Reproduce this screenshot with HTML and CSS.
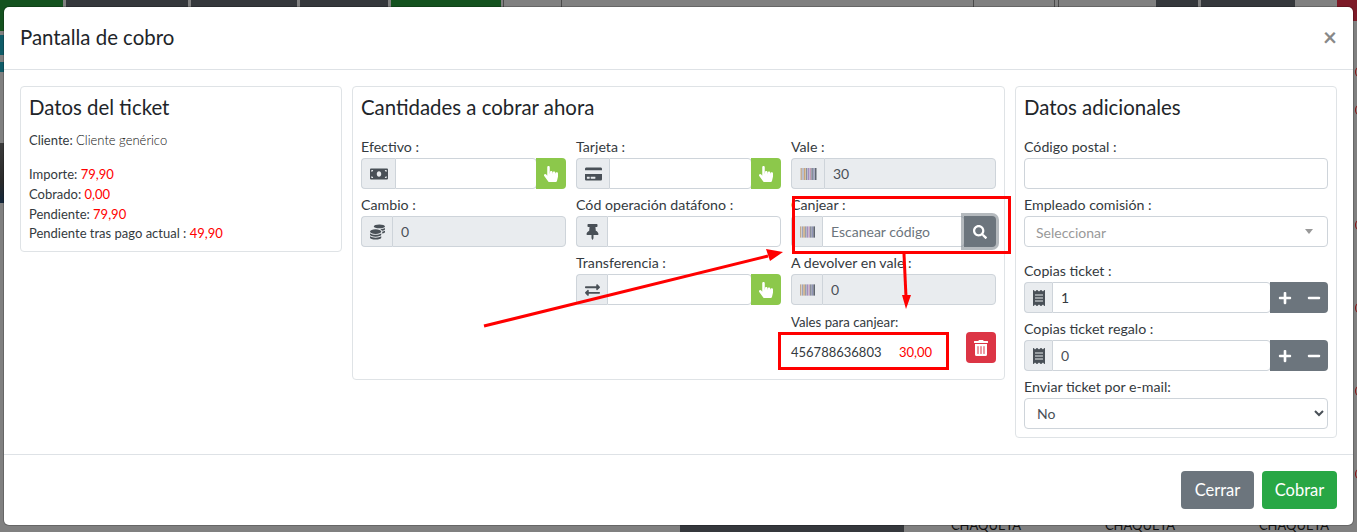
FILE: index.html
```html
<!DOCTYPE html>
<html lang="es">
<head>
<meta charset="utf-8">
<title>Pantalla de cobro</title>
<link rel="stylesheet" href="styles.css">
</head>
<body>
<svg class="sprite" xmlns="http://www.w3.org/2000/svg">
  <symbol id="i-hand" viewBox="0 0 448 512"><path d="M448 240v96c0 3.084-.356 6.159-1.063 9.162l-32 136C410.686 499.23 394.562 512 376 512H168a40.004 40.004 0 0 1-32.35-16.473l-127.997-176c-12.993-17.866-9.043-42.883 8.822-55.876 17.867-12.994 42.884-9.043 55.877 8.823L104 315.992V40c0-22.091 17.908-40 40-40s40 17.909 40 40v200h8v-40c0-22.091 17.908-40 40-40s40 17.909 40 40v40h8v-24c0-22.091 17.908-40 40-40s40 17.909 40 40v24h8c0-22.091 17.908-40 40-40s40 17.909 40 40z"/></symbol>
  <symbol id="i-money" viewBox="0 0 640 512"><path d="M608 64H32C14.33 64 0 78.33 0 96v320c0 17.67 14.33 32 32 32h576c17.67 0 32-14.33 32-32V96c0-17.67-14.33-32-32-32zM48 400v-64c35.35 0 64 28.65 64 64H48zm0-224v-64h64c0 35.35-28.65 64-64 64zm272 176c-44.19 0-80-42.99-80-96 0-53.02 35.82-96 80-96s80 42.98 80 96c0 53.03-35.83 96-80 96zm272 48h-64c0-35.35 28.65-64 64-64v64zm0-224c-35.35 0-64-28.65-64-64h64v64z"/></symbol>
  <symbol id="i-card" viewBox="0 0 576 512"><path d="M0 432c0 26.5 21.5 48 48 48h480c26.5 0 48-21.5 48-48V256H0v176zm192-68c0-6.6 5.4-12 12-12h136c6.6 0 12 5.4 12 12v40c0 6.6-5.4 12-12 12H204c-6.6 0-12-5.4-12-12v-40zm-128 0c0-6.6 5.4-12 12-12h72c6.6 0 12 5.4 12 12v40c0 6.6-5.4 12-12 12H76c-6.6 0-12-5.4-12-12v-40zM576 80v48H0V80c0-26.5 21.5-48 48-48h480c26.5 0 48 21.5 48 48z"/></symbol>
  <symbol id="i-pin" viewBox="0 0 384 512"><path d="M298.028 214.267L285.793 96H328c13.255 0 24-10.745 24-24V24c0-13.255-10.745-24-24-24H56C42.745 0 32 10.745 32 24v48c0 13.255 10.745 24 24 24h42.207L85.972 214.267C37.465 236.82 0 277.261 0 328c0 13.255 10.745 24 24 24h136v104.007c0 1.242.289 2.467.845 3.578l24 48c2.941 5.882 11.364 5.893 14.311 0l24-48a8.008 8.008 0 0 0 .845-3.578V352h136c13.255 0 24-10.745 24-24-.001-51.183-37.983-91.42-85.973-113.733z"/></symbol>
  <symbol id="i-coins" viewBox="0 0 512 512"><path d="M0 405.3V448c0 35.3 86 64 192 64s192-28.7 192-64v-42.7C342.7 434.4 267.2 448 192 448S41.3 434.4 0 405.3zM320 128c106 0 192-28.7 192-64S426 0 320 0 128 28.7 128 64s86 64 192 64zM0 300.4V352c0 35.3 86 64 192 64s192-28.7 192-64v-51.6c-41.3 34-116.9 51.6-192 51.6S41.3 334.4 0 300.4zm416 11c57.3-11.1 96-31.7 96-55.4v-42.7c-23.2 16.4-57.3 27.6-96 34.5v63.6zM192 160C86 160 0 195.8 0 240s86 80 192 80 192-35.8 192-80-86-80-192-80zm219.3 56.3c60-10.8 100.7-32 100.7-56.3v-42.7c-35.5 25.1-96.5 38.6-160.7 41.8 29.5 14.3 51.2 33.5 60 57.2z"/></symbol>
  <symbol id="i-exchange" viewBox="0 0 512 512"><path d="M0 168v-16c0-13.255 10.745-24 24-24h360V80c0-21.367 25.899-32.042 40.971-16.971l80 80c9.372 9.373 9.372 24.569 0 33.941l-80 80C409.956 271.982 384 261.456 384 240v-48H24c-13.255 0-24-10.745-24-24zm488 152H128v-48c0-21.314-25.862-32.08-40.971-16.971l-80 80c-9.372 9.373-9.372 24.569 0 33.941l80 80C102.057 463.997 128 453.437 128 432v-48h360c13.255 0 24-10.745 24-24v-16c0-13.255-10.745-24-24-24z"/></symbol>
  <symbol id="i-barcode" viewBox="0 0 16 12">
    <rect x="0" width="1.4" height="12" fill="#c2a98c"/><rect x="2" width="1" height="12" fill="#8d93b0"/><rect x="3.5" width="1.6" height="12" fill="#c9a67c"/><rect x="5.6" width="1.2" height="12" fill="#7f8794"/><rect x="7.2" width="1.8" height="12" fill="#a48fc0"/><rect x="9.4" width="1.1" height="12" fill="#c39bb0"/><rect x="10.9" width="1.4" height="12" fill="#6f7684"/><rect x="12.7" width="1.1" height="12" fill="#8b8fb5"/><rect x="14.2" width="1.8" height="12" fill="#5f6570"/>
  </symbol>
  <symbol id="i-search" viewBox="0 0 512 512"><path d="M505 442.7L405.3 343c-4.5-4.5-10.6-7-17-7H372c27.6-35.3 44-79.7 44-128C416 93.1 322.9 0 208 0S0 93.1 0 208s93.1 208 208 208c48.3 0 92.7-16.4 128-44v16.3c0 6.4 2.5 12.5 7 17l99.7 99.7c9.4 9.4 24.6 9.4 33.9 0l28.3-28.3c9.4-9.4 9.4-24.6.1-34zM208 336c-70.7 0-128-57.2-128-128 0-70.7 57.2-128 128-128 70.7 0 128 57.2 128 128 0 70.7-57.2 128-128 128z"/></symbol>
  <symbol id="i-trash" viewBox="0 0 448 512"><path d="M32 464a48 48 0 0 0 48 48h288a48 48 0 0 0 48-48V128H32zm272-256a16 16 0 0 1 32 0v224a16 16 0 0 1-32 0zm-96 0a16 16 0 0 1 32 0v224a16 16 0 0 1-32 0zm-96 0a16 16 0 0 1 32 0v224a16 16 0 0 1-32 0zM432 32H312l-9.4-18.7A24 24 0 0 0 281.1 0H166.8a23.72 23.72 0 0 0-21.4 13.3L136 32H16A16 16 0 0 0 0 48v32a16 16 0 0 0 16 16h416a16 16 0 0 0 16-16V48a16 16 0 0 0-16-16z"/></symbol>
  <symbol id="i-receipt" viewBox="0 0 384 512"><path d="M358.4 3.2L320 48 265.6 3.2a15.9 15.9 0 0 0-19.2 0L192 48 137.6 3.2a15.9 15.9 0 0 0-19.2 0L64 48 25.6 3.2C15-4.7 0 2.8 0 16v480c0 13.2 15 20.7 25.6 12.8L64 464l54.4 44.8a15.9 15.9 0 0 0 19.2 0L192 464l54.4 44.8a15.9 15.9 0 0 0 19.2 0L320 464l38.4 44.8c10.5 7.9 25.6.4 25.6-12.8V16c0-13.2-15-20.7-25.6-12.8zM320 360c0 4.4-3.6 8-8 8H72c-4.4 0-8-3.6-8-8v-16c0-4.4 3.6-8 8-8h240c4.4 0 8 3.6 8 8v16zm0-96c0 4.4-3.6 8-8 8H72c-4.4 0-8-3.6-8-8v-16c0-4.4 3.6-8 8-8h240c4.4 0 8 3.6 8 8v16zm0-96c0 4.4-3.6 8-8 8H72c-4.4 0-8-3.6-8-8v-16c0-4.4 3.6-8 8-8h240c4.4 0 8 3.6 8 8v16z"/></symbol>
  <symbol id="i-plus" viewBox="0 0 448 512"><path d="M416 208H272V64c0-17.67-14.33-32-32-32h-32c-17.67 0-32 14.33-32 32v144H32c-17.67 0-32 14.33-32 32v32c0 17.67 14.33 32 32 32h144v144c0 17.67 14.33 32 32 32h32c17.67 0 32-14.33 32-32V304h144c17.67 0 32-14.33 32-32v-32c0-17.67-14.33-32-32-32z"/></symbol>
  <symbol id="i-minus" viewBox="0 0 448 512"><path d="M416 208H32c-17.67 0-32 14.33-32 32v32c0 17.67 14.33 32 32 32h384c17.67 0 32-14.33 32-32v-32c0-17.67-14.33-32-32-32z"/></symbol>
</svg>

<div class="backdrop">
  <div class="bg-top">
    <span class="seg seg-green w63"></span><span class="seg seg-gap"></span>
    <span class="seg seg-dark w122"></span><span class="seg seg-gap"></span>
    <span class="seg seg-dark w106"></span><span class="seg seg-gap"></span>
    <span class="seg seg-dark w88"></span><span class="seg seg-gap"></span>
    <span class="seg seg-green w110"></span>
    <span class="seg seg-fill"></span>
    <span class="seg seg-dark w42"></span><span class="seg seg-gap"></span>
    <span class="seg seg-dark w94"></span>
    <span class="seg seg-gray w42"></span>
    <span class="seg seg-red w20"></span>
  </div>
  <div class="bg-left">
    <span class="lft lft-green"></span>
    <span class="lft lft-gap-a"></span>
    <span class="lft lft-teal-a"></span>
    <span class="lft lft-gap-b"></span>
    <span class="lft lft-teal-b"></span>
    <span class="lft lft-gap-c"></span>
    <span class="lft lft-photo"></span>
  </div>
  <div class="bg-right">
    <span></span><span></span><span></span><span></span><span></span><span></span>
  </div>
  <div class="bg-bottom">
    <span class="bot bot-dark"></span>
    <span class="bot">CHAQUETA</span>
    <span class="bot">CHAQUETA</span>
    <span class="bot">CHAQUETA</span>
  </div>
</div>

<div class="modal">
  <header class="modal-header">
    <h5 class="modal-title">Pantalla de cobro</h5>
    <button class="close" type="button">×</button>
  </header>

  <div class="modal-body">
    <section class="card card-side">
      <h4 class="card-title">Datos del ticket</h4>
      <p class="client"><span class="medium">Cliente:</span> <span class="light">Cliente genérico</span></p>
      <p class="line">Importe: <span class="red">79,90</span></p>
      <p class="line">Cobrado: <span class="red">0,00</span></p>
      <p class="line">Pendiente: <span class="red">79,90</span></p>
      <p class="line">Pendiente tras pago actual : <span class="red">49,90</span></p>
    </section>

    <section class="card card-main">
      <h4 class="card-title">Cantidades a cobrar ahora</h4>
      <div class="grid">
        <div class="col">
          <div class="field">
            <label>Efectivo :</label>
            <div class="group">
              <span class="addon"><svg class="ic ic-18"><use href="#i-money"/></svg></span>
              <input class="control" type="text">
              <button class="btn-hand" type="button"><svg class="hand"><use href="#i-hand"/></svg></button>
            </div>
          </div>
          <div class="field">
            <label>Cambio :</label>
            <div class="group">
              <span class="addon"><svg class="ic ic-15"><use href="#i-coins"/></svg></span>
              <input class="control" type="text" value="0" disabled>
            </div>
          </div>
        </div>
        <div class="col">
          <div class="field">
            <label>Tarjeta :</label>
            <div class="group">
              <span class="addon"><svg class="ic ic-16"><use href="#i-card"/></svg></span>
              <input class="control" type="text">
              <button class="btn-hand" type="button"><svg class="hand"><use href="#i-hand"/></svg></button>
            </div>
          </div>
          <div class="field">
            <label>Cód operación datáfono :</label>
            <div class="group">
              <span class="addon"><svg class="ic ic-15"><use href="#i-pin"/></svg></span>
              <input class="control" type="text">
            </div>
          </div>
          <div class="field">
            <label>Transferencia :</label>
            <div class="group">
              <span class="addon"><svg class="ic ic-15"><use href="#i-exchange"/></svg></span>
              <input class="control" type="text">
              <button class="btn-hand" type="button"><svg class="hand"><use href="#i-hand"/></svg></button>
            </div>
          </div>
        </div>
        <div class="col">
          <div class="field">
            <label>Vale :</label>
            <div class="group">
              <span class="addon"><svg class="ic ic-16 ic-bar"><use href="#i-barcode"/></svg></span>
              <input class="control" type="text" value="30" disabled>
            </div>
          </div>
          <div class="field">
            <label>Canjear :</label>
            <div class="group">
              <span class="addon"><svg class="ic ic-15 ic-bar"><use href="#i-barcode"/></svg></span>
              <input class="control" type="text" placeholder="Escanear código">
              <button class="btn-search" type="button"><svg class="ic-white ic-14"><use href="#i-search"/></svg></button>
            </div>
          </div>
          <div class="field">
            <label>A devolver en vale :</label>
            <div class="group">
              <span class="addon"><svg class="ic ic-15 ic-bar"><use href="#i-barcode"/></svg></span>
              <input class="control" type="text" value="0" disabled>
            </div>
          </div>
          <div class="field field-last">
            <label class="label-tight">Vales para canjear:</label>
            <div class="voucher">
              <span class="voucher-code">456788636803</span>
              <span class="red voucher-amount">30,00</span>
              <button class="btn-trash" type="button"><svg class="ic-white ic-trash"><use href="#i-trash"/></svg></button>
            </div>
          </div>
        </div>
      </div>
    </section>

    <section class="card card-side">
      <h4 class="card-title">Datos adicionales</h4>
      <div class="field">
        <label>Código postal :</label>
        <input class="control control-solo" type="text">
      </div>
      <div class="field field-wide">
        <label>Empleado comisión :</label>
        <div class="select2"><span>Seleccionar</span><i class="caret"></i></div>
      </div>
      <div class="field">
        <label>Copias ticket :</label>
        <div class="group">
          <span class="addon"><svg class="ic ic-11"><use href="#i-receipt"/></svg></span>
          <input class="control control-dark" type="text" value="1">
          <button class="btn-step" type="button"><svg class="ic-white ic-14"><use href="#i-plus"/></svg></button>
          <button class="btn-step btn-step-end" type="button"><svg class="ic-white ic-14"><use href="#i-minus"/></svg></button>
        </div>
      </div>
      <div class="field">
        <label>Copias ticket regalo :</label>
        <div class="group">
          <span class="addon"><svg class="ic ic-11"><use href="#i-receipt"/></svg></span>
          <input class="control" type="text" value="0">
          <button class="btn-step" type="button"><svg class="ic-white ic-14"><use href="#i-plus"/></svg></button>
          <button class="btn-step btn-step-end" type="button"><svg class="ic-white ic-14"><use href="#i-minus"/></svg></button>
        </div>
      </div>
      <div class="field field-end">
        <label>Enviar ticket por e-mail:</label>
        <select class="control control-solo native"><option>No</option></select>
      </div>
    </section>
  </div>

  <footer class="modal-footer">
    <button class="btn btn-gray" type="button">Cerrar</button>
    <button class="btn btn-green" type="button">Cobrar</button>
  </footer>
</div>

<div class="mark mark-canjear"></div>
<div class="mark mark-vale"></div>
<svg class="arrows" width="1357" height="532" viewBox="0 0 1357 532" xmlns="http://www.w3.org/2000/svg">
  <line x1="484" y1="326" x2="768" y2="256" stroke="#f00" stroke-width="3"/>
  <polygon points="783,252 766,249 770,261" fill="#f00"/>
  <line x1="904" y1="254" x2="906" y2="297" stroke="#f00" stroke-width="3"/>
  <polygon points="906,309 902,295 911,295" fill="#f00"/>
</svg>
</body>
</html>
```

FILE: styles.css
```css
* { box-sizing: border-box; }

html, body {
  margin: 0;
  height: 100%;
}

body {
  position: relative;
  width: 1357px;
  height: 532px;
  overflow: hidden;
  background: #808080;
  font-family: Lato, "Liberation Sans", sans-serif;
  font-size: 14px;
  line-height: 21px;
  color: #343a40;
}

.sprite { display: none; }

/* dimmed page behind the dialog */
.backdrop {
  position: absolute;
  inset: 0;
  overflow: hidden;
}

.bg-top { display: flex; height: 21px; }
.seg { display: block; height: 100%; flex: none; }
.seg-gap { width: 3px; }
.seg-green { background: #14521f; }
.seg-dark { background: #35383c; }
.seg-gray { background: #808080; }
.seg-red { background: #7d1a27; }
.seg-fill {
  flex: 1;
  background-image:
    linear-gradient(#4a4a4a, #4a4a4a),
    linear-gradient(#4a4a4a, #4a4a4a),
    linear-gradient(#4a4a4a, #4a4a4a),
    linear-gradient(#4a4a4a, #4a4a4a),
    linear-gradient(#4a4a4a, #4a4a4a);
  background-size: 1px 100%;
  background-repeat: no-repeat;
  background-position: 2px 0, 60px 0, 472px 0, 553px 0, 557px 0;
}
.w20 { width: 20px; }
.w42 { width: 42px; }
.w63 { width: 63px; }
.w88 { width: 88px; }
.w94 { width: 94px; }
.w106 { width: 106px; }
.w110 { width: 110px; }
.w122 { width: 122px; }

.bg-left {
  position: absolute;
  left: 0;
  top: 0;
  width: 4px;
  display: flex;
  flex-direction: column;
}
.lft { display: block; }
.lft-green { height: 31px; background: #14521f; }
.lft-gap-a { height: 4px; }
.lft-teal-a { height: 20px; background: #0f5c68; }
.lft-gap-b { height: 7px; }
.lft-teal-b { height: 10px; background: #0f5c68; }
.lft-gap-c { height: 71px; }
.lft-photo { height: 60px; background: linear-gradient(#3b3b3b, #2a2a2a 65%, #14283c); }

.bg-right {
  position: absolute;
  right: -6px;
  top: 67px;
  width: 8px;
  display: flex;
  flex-direction: column;
}
.bg-right span {
  display: block;
  height: 10px;
  border: 1.5px solid #8a1010;
  border-radius: 50%;
  margin-bottom: 73px;
}
.bg-right span:nth-child(1) { margin-bottom: 28px; }
.bg-right span:nth-child(2) { margin-bottom: 105px; }

.bg-bottom {
  position: absolute;
  left: 0;
  right: 0;
  bottom: 0;
  height: 14px;
  display: flex;
  padding-left: 680px;
  color: #111;
  font-size: 13px;
  line-height: 14px;
}
.bot { flex: none; width: 154px; text-align: center; }
.bot-dark { width: 224px; height: 14px; background: #35383c; margin-right: 5px; }

/* dialog */
.modal {
  position: absolute;
  left: 4px;
  top: 7px;
  width: 1349px;
  height: 518px;
  background: #fff;
  border-radius: 5px;
  box-shadow: 0 0 0 1px rgba(0, 0, 0, .2);
  display: flex;
  flex-direction: column;
}

.modal-header {
  display: flex;
  align-items: center;
  justify-content: space-between;
  height: 63px;
  padding: 0 16px 2px;
  border-bottom: 1px solid #dee2e6;
}

.modal-title {
  margin: 0;
  font-size: 20.4px;
  font-weight: 400;
  line-height: 30px;
  color: #212529;
}

.close {
  border: 0;
  background: none;
  padding: 0;
  width: 14px;
  font-family: Lato, sans-serif;
  font-size: 24px;
  font-weight: 700;
  line-height: 1;
  color: #888;
}

.modal-body {
  display: flex;
  align-items: flex-start;
  gap: 10px;
  padding: 16px;
  height: 384px;
}

.card {
  flex: none;
  border: 1px solid #dfe3e6;
  border-radius: 4px;
  padding: 8px;
}
.card-side { width: 322px; }
.card-main { width: 653px; height: 294px; }
.card-side:first-child { height: 166px; }

.card-title {
  margin: 0 0 17px;
  font-size: 20.4px;
  font-weight: 400;
  line-height: 25px;
  color: #212529;
}

.client {
  margin: -7px 0 15px;
  font-size: 13px;
  line-height: 20px;
}
.line { margin: 0; font-size: 13px; line-height: 19.8px; }
.medium { font-weight: 400; }
.light { font-weight: 300; color: #111; }
.red { color: #f00; }

.grid {
  display: grid;
  grid-template-columns: repeat(3, 205px);
  column-gap: 10px;
}

.field { margin-bottom: 6px; }
.field label { display: block; height: 21px; font-size: 14.2px; line-height: 19px; }
.field .label-tight { font-size: 13.2px; line-height: 23px; }
.field-wide { margin-bottom: 14px; }
.field-end { margin-bottom: 0; }
.field-last { margin-bottom: 0; }

.group { display: flex; height: 31px; }

.addon {
  flex: none;
  display: flex;
  align-items: center;
  padding: 0 7px 0 8px;
  background: #e9ecef;
  border: 1px solid #ced4da;
  border-right: 0;
  border-radius: 4px 0 0 4px;
}

.ic { display: block; height: 16px; fill: #495057; }
.ic-11 { width: 12px; }
.ic-15 { width: 15px; }
.ic-16 { width: 17px; }
.ic-18 { width: 18px; }
.ic-bar { height: 12px; }

.control {
  flex: 1;
  min-width: 0;
  height: 31px;
  padding: 4px 8px;
  border: 1px solid #ced4da;
  border-radius: 0 4px 4px 0;
  background: #fff;
  font-family: inherit;
  font-size: 14px;
  color: #495057;
  outline: 0;
}
.control:disabled { background: #e9ecef; }
.control::placeholder { color: #6c757d; opacity: 1; }
.control-dark { color: #343a40; }
.control-solo { display: block; width: 100%; border-radius: 4px; }
.native { padding-left: 8px; }

.btn-hand, .btn-search, .btn-step, .btn-trash {
  flex: none;
  display: flex;
  align-items: center;
  justify-content: center;
  border: 0;
  padding: 0;
  color: #fff;
}

.btn-hand {
  width: 30px;
  height: 31px;
  margin-left: -1px;
  background: #8cc84b;
  border-radius: 0 4px 4px 0;
}
.hand { width: 14px; height: 16px; fill: #fff; }

.btn-search {
  position: relative;
  width: 32px;
  height: 31px;
  margin-left: -1px;
  background: #6c757d;
  border-radius: 0 4px 4px 0;
  box-shadow: 0 0 0 3px rgba(108, 117, 125, .5);
}

.ic-white { display: block; fill: #fff; }
.ic-14 { width: 14px; height: 14px; }

.btn-step { width: 29px; height: 31px; margin-left: -1px; background: #6c757d; }
.btn-step + .btn-step { margin-left: 0; }
.btn-step-end { border-radius: 0 4px 4px 0; }

.voucher {
  display: flex;
  align-items: center;
  height: 31px;
  font-size: 13px;
}
.voucher-code { width: 108px; padding-top: 10px; line-height: 21px; }
.voucher-amount { width: 67px; padding-top: 10px; line-height: 21px; }
.btn-trash { width: 30px; height: 31px; background: #dc3545; border-radius: 4px; }
.ic-trash { width: 14px; height: 16px; }

.select2 {
  display: flex;
  align-items: center;
  justify-content: space-between;
  height: 31px;
  padding: 2px 14px 0 11px;
  border: 1px solid #ced4da;
  border-radius: 4px;
  color: #999;
}
.caret {
  display: block;
  margin-top: -2px;
  border-top: 5px solid #999;
  border-left: 4px solid transparent;
  border-right: 4px solid transparent;
}

.modal-footer {
  display: flex;
  justify-content: flex-end;
  gap: 8px;
  padding: 16px;
  border-top: 1px solid #dee2e6;
}

.btn {
  height: 38px;
  padding: 0;
  border: 0;
  border-radius: 4px;
  font-family: inherit;
  font-size: 16.5px;
  color: #fff;
}
.btn-gray { width: 73px; background: #6c757d; }
.btn-green { width: 75px; background: #28a745; }

/* annotations drawn over the screenshot */
.mark {
  position: absolute;
  border: 3px solid #f00;
}
.mark-canjear { left: 792px; top: 196px; width: 219px; height: 58px; }
.mark-vale { left: 778px; top: 332px; width: 171px; height: 38px; }

.arrows {
  position: absolute;
  left: 0;
  top: 0;
  pointer-events: none;
}
```
